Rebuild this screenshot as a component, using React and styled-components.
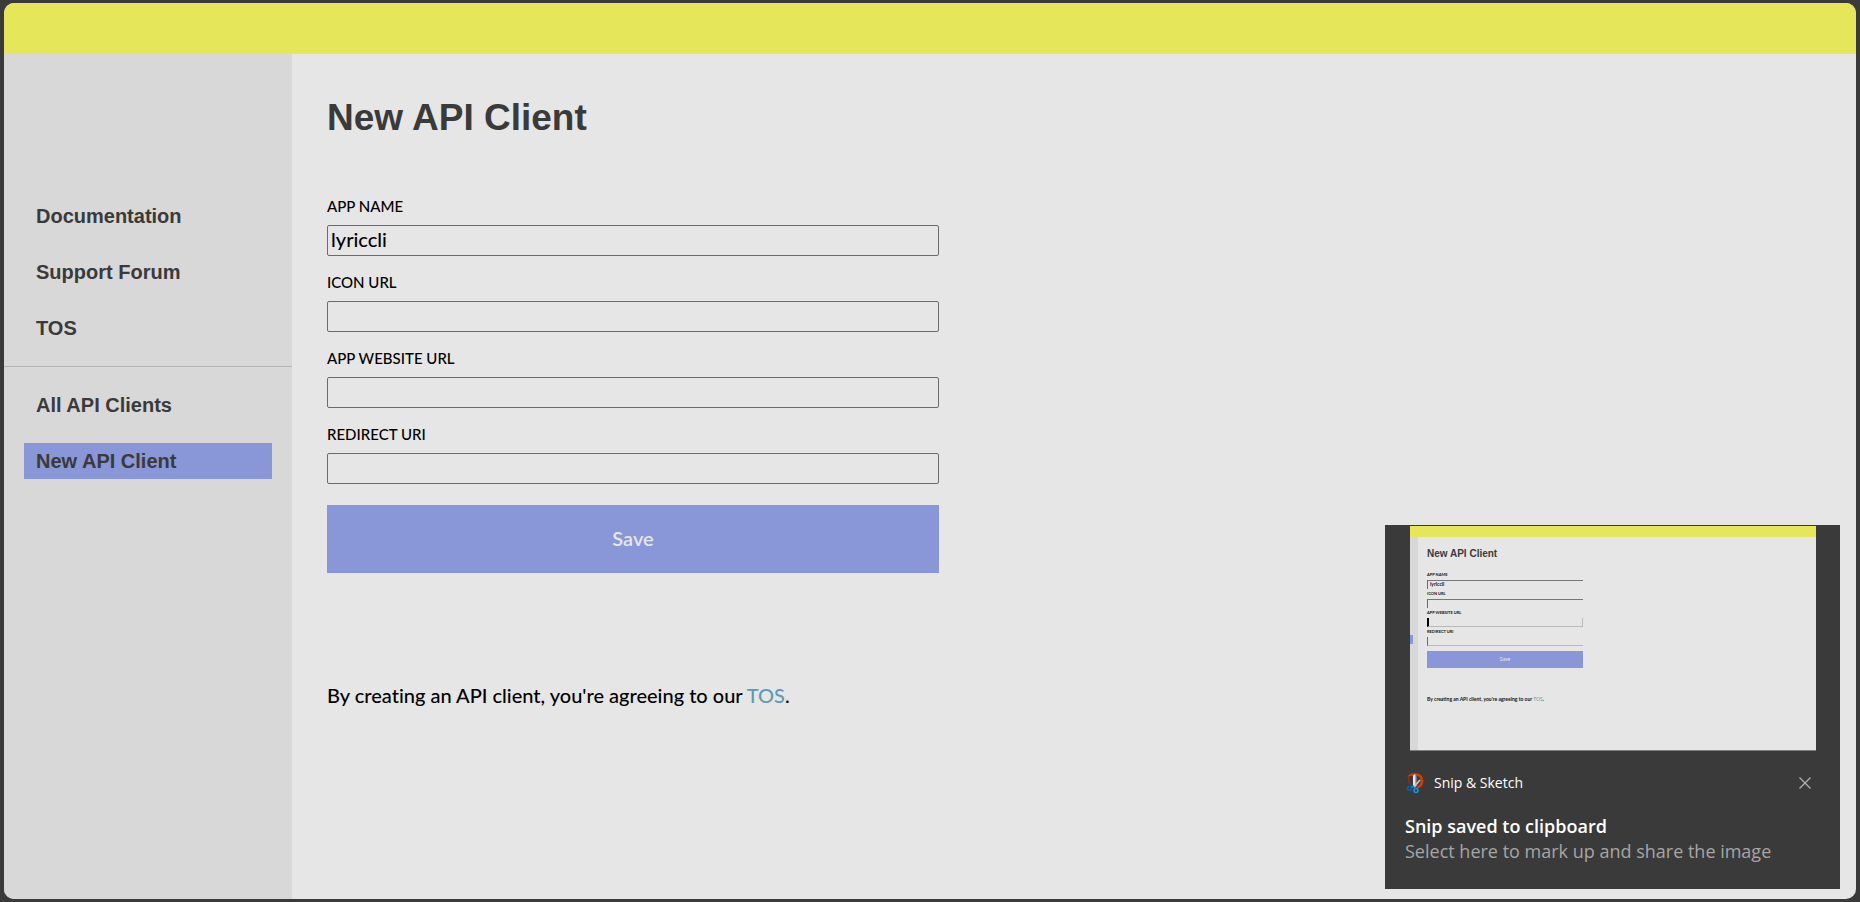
import React from 'react';
import styled, { createGlobalStyle } from 'styled-components';

const sans = '"Liberation Sans", Arial, sans-serif';
const body = 'Lato, "Noto Sans", sans-serif';
const system = '"Open Sans", "Noto Sans", sans-serif';

const GlobalStyle = createGlobalStyle`
  *, *::before, *::after { box-sizing: border-box; }
  body { margin: 0; background: #3a3a3a; font-family: ${body}; }
`;

const Desktop = styled.div`
  display: flex;
  min-height: 100vh;
  padding: 3px 4px;
`;

const Window = styled.div`
  flex: 1;
  display: flex;
  flex-direction: column;
  overflow: hidden;
  border-radius: 10px;
  background: #e6e6e6;
`;

const Banner = styled.header`
  height: 51px;
  background: #e6e65a;
`;

const Columns = styled.div`
  flex: 1;
  display: flex;
`;

const Sidebar = styled.nav`
  flex: none;
  width: 288px;
  padding-top: 144px;
  background: #d8d8d8;
`;

const NavList = styled.ul`
  display: flex;
  flex-direction: column;
  gap: 20px;
  margin: 0;
  padding: 0 20px 20px;
  list-style: none;

  & + & {
    padding-top: 20px;
    border-top: 1px solid #b6b6b6;
  }
`;

const NavLink = styled.a`
  display: block;
  padding: 0 12px;
  font: 700 20px/36px ${sans};
  color: #3a3a3a;
  text-decoration: none;
  background: ${(p) => (p.$active ? '#8996d7' : 'transparent')};
`;

const Main = styled.main`
  flex: 1;
  padding: 42px 35px;
`;

const Title = styled.h1`
  margin: 0 0 57px;
  font: 700 37px/44px ${sans};
  color: #3a3a3a;
`;

const Form = styled.form`
  display: flex;
  flex-direction: column;
  max-width: 612px;
`;

const Field = styled.div`
  display: flex;
  flex-direction: column;
  gap: 10px;
  margin-bottom: 17px;
`;

const Label = styled.label`
  font: 500 15px/18px ${body};
  color: #000;
  text-transform: uppercase;
`;

const TextInput = styled.input`
  width: 100%;
  height: 31px;
  padding: 0 3px 3px;
  border: 1px solid #6b6b6b;
  border-radius: 2px;
  background: transparent;
  font: 500 20px/24px ${body};
  color: #000;
  outline: none;
`;

const SaveButton = styled.button`
  height: 68px;
  margin-top: 4px;
  padding: 0 0 2px;
  border: 0;
  background: #8996d7;
  font: 600 20px/24px ${body};
  color: #e6e6e6;
`;

const Terms = styled.p`
  margin: 110px 0 0;
  font: 500 20px/24px ${body};
  font-variant-ligatures: none;
  color: #000;
`;

const TermsLink = styled.a`
  color: #5a9bb5;
  text-decoration: none;
`;

const Toast = styled.aside`
  position: fixed;
  right: 20px;
  bottom: 13px;
  width: 455px;
  padding: 1px 20px 25px;
  background: #3a3a3a;
  font-family: ${system};
`;

const Preview = styled.div`
  display: flex;
  flex-direction: column;
  width: 406px;
  height: 225px;
  margin: 0 auto 21px 5px;
  border-bottom: 1px solid #7c807c;
  background: #e6e6e6;
`;

const PreviewBanner = styled.div`
  height: 11px;
  background: #e6e65a;
`;

const PreviewColumns = styled.div`
  flex: 1;
  display: flex;
`;

const PreviewSidebar = styled.div`
  width: 8px;
  padding-top: 98px;
  background: #d8d8d8;

  &::before {
    content: '';
    display: block;
    width: 3px;
    height: 9px;
    background: #8996d7;
  }
`;

const PreviewMain = styled.div`
  padding: 11px 9px 0;
`;

const PreviewTitle = styled.div`
  margin-bottom: 12px;
  font: 700 10px/12px ${sans};
  color: #3a3a3a;
`;

const PreviewLabel = styled.div`
  font: 700 4px/6px ${body};
  color: #111;
`;

const PreviewInput = styled.div`
  width: 156px;
  height: 9px;
  margin: 2px 0;
  padding-left: 2px;
  border: 0 solid #b9b9b9;
  border-left: 1px solid #6b6b6b;
  border-top: ${(p) => (p.$edge === 'top' ? '1px solid #777' : '0')};
  border-bottom-width: ${(p) => (p.$edge === 'top' ? '0' : '1px')};
  font: 700 5px/7px ${body};
  color: #111;

  ${(p) => p.$focused && 'border-left: 2px solid #000; border-right-width: 1px;'}
`;

const PreviewSave = styled.div`
  width: 156px;
  height: 17px;
  margin-top: 5px;
  background: #8996d7;
  font: 500 5px/17px ${body};
  text-align: center;
  color: #e6e6e6;
`;

const PreviewTerms = styled.div`
  margin-top: 28px;
  font: 700 5px/6px ${body};
  color: #111;

  span { color: #5a9bb5; font-weight: 400; }
`;

const ToastHeader = styled.div`
  display: flex;
  align-items: center;
  margin-bottom: 19px;
`;

const ToastApp = styled.span`
  flex: 1;
  margin-left: 9px;
  font-size: 14px;
  line-height: 20px;
  color: #fff;
`;

const CloseButton = styled.button`
  display: flex;
  margin: 0 9px 0 0;
  padding: 0;
  border: 0;
  background: none;
  color: #b4b4b4;
`;

const ToastTitle = styled.strong`
  display: block;
  font-size: 18px;
  font-weight: 600;
  line-height: 26px;
  color: #fff;
`;

const ToastText = styled.p`
  margin: 0;
  font-size: 18px;
  line-height: 25px;
  color: #a6a6a6;
`;

function SnipIcon() {
  return (
    <svg width="20" height="22" viewBox="0 0 20 22" fill="none" aria-hidden="true">
      <path d="M4 5C2.500 8 4 12 8 14" stroke="#a92d10" strokeWidth="1" />
      <path d="M2.500 5C3 1.500 9 .5 12 1.500L10.500 4C7.500 3.500 5 4 2.500 5z" fill="#d83b01" />
      <path d="M11 2.500c6 0 7.500 7.500 4.500 11-1 1-2.500 1.500-3.500 1" stroke="#d83b01" strokeWidth="2.600" />
      <path d="M8 3.500L10 2v13H8z" fill="#e8e8e8" />
      <path d="M10 2l1.500 2v10L10 15z" fill="#a8a8a8" />
      <path d="M15 8l-6 7" stroke="#c4c4c4" strokeWidth="1.800" />
      <circle cx="4.500" cy="16.500" r="2" stroke="#0063b1" strokeWidth="1.600" />
      <circle cx="11" cy="18.500" r="2" stroke="#1b93e0" strokeWidth="1.600" />
      <path d="M6.500 15.500L9 14M10 17v-2" stroke="#1683d8" strokeWidth="1.500" />
    </svg>
  );
}

function CloseIcon() {
  return (
    <svg width="12" height="12" viewBox="0 0 12 12" fill="none" aria-hidden="true">
      <path d="M.5.5l11 11M11.500.5l-11 11" stroke="currentColor" strokeWidth="1.200" />
    </svg>
  );
}

const resources = ['Documentation', 'Support Forum', 'TOS'];
const clients = ['All API Clients', 'New API Client'];

const fields = [
  { id: 'app-name', label: 'App name', value: 'lyriccli' },
  { id: 'icon-url', label: 'Icon URL', value: '' },
  { id: 'website-url', label: 'App website URL', value: '' },
  { id: 'redirect-uri', label: 'Redirect URI', value: '' },
];

function NavGroup({ items }) {
  return (
    <NavList>
      {items.map((item) => (
        <li key={item}>
          <NavLink href="#" $active={item === 'New API Client'}>{item}</NavLink>
        </li>
      ))}
    </NavList>
  );
}

function SnipPreview() {
  return (
    <Preview aria-hidden="true">
      <PreviewBanner />
      <PreviewColumns>
        <PreviewSidebar />
        <PreviewMain>
          <PreviewTitle>New API Client</PreviewTitle>
          <PreviewLabel>APP NAME</PreviewLabel>
          <PreviewInput $edge="top">lyriccli</PreviewInput>
          <PreviewLabel>ICON URL</PreviewLabel>
          <PreviewInput $edge="top" />
          <PreviewLabel>APP WEBSITE URL</PreviewLabel>
          <PreviewInput $focused />
          <PreviewLabel>REDIRECT URI</PreviewLabel>
          <PreviewInput />
          <PreviewSave>Save</PreviewSave>
          <PreviewTerms>
            By creating an API client, you're agreeing to our <span>TOS</span>.
          </PreviewTerms>
        </PreviewMain>
      </PreviewColumns>
    </Preview>
  );
}

export default function App() {
  return (
    <>
      <GlobalStyle />
      <Desktop>
        <Window>
          <Banner />
          <Columns>
            <Sidebar>
              <NavGroup items={resources} />
              <NavGroup items={clients} />
            </Sidebar>
            <Main>
              <Title>New API Client</Title>
              <Form onSubmit={(e) => e.preventDefault()}>
                {fields.map((f) => (
                  <Field key={f.id}>
                    <Label htmlFor={f.id}>{f.label}</Label>
                    <TextInput id={f.id} type="text" defaultValue={f.value} />
                  </Field>
                ))}
                <SaveButton type="submit">Save</SaveButton>
              </Form>
              <Terms>
                By creating an API client, you're agreeing to our{' '}
                <TermsLink href="#">TOS</TermsLink>.
              </Terms>
            </Main>
          </Columns>
        </Window>
      </Desktop>
      <Toast>
        <SnipPreview />
        <ToastHeader>
          <SnipIcon />
          <ToastApp>Snip &amp; Sketch</ToastApp>
          <CloseButton type="button" aria-label="Close"><CloseIcon /></CloseButton>
        </ToastHeader>
        <ToastTitle>Snip saved to clipboard</ToastTitle>
        <ToastText>Select here to mark up and share the image</ToastText>
      </Toast>
    </>
  );
}
